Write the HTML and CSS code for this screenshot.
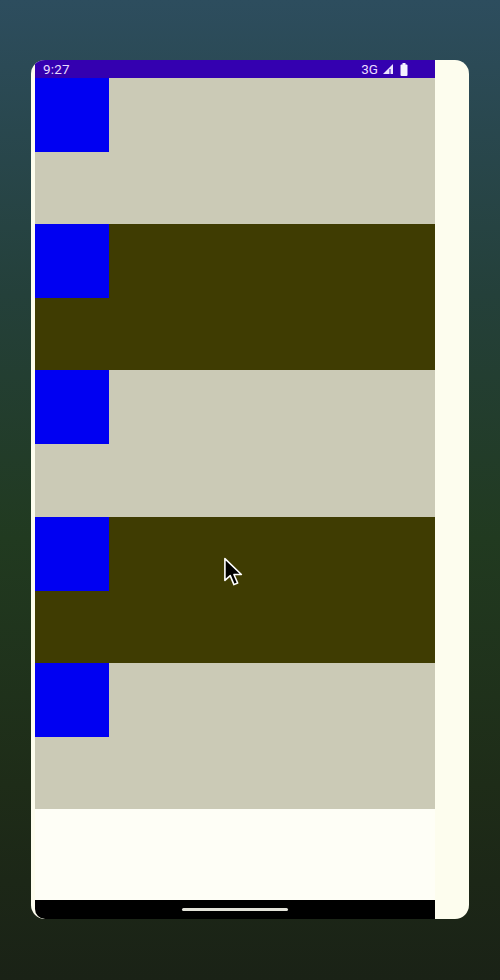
FILE: index.html
```html
<!DOCTYPE html>
<html>
<head>
<meta charset="utf-8">
<link rel="stylesheet" href="styles.css">
</head>
<body>
<div class="phone">
  <div class="screen">
    <div class="status">
      <span class="time">9:27</span>
      <div class="icons">
        <span class="net">3G</span>
        <svg class="signal" width="12" height="12" viewBox="0 0 12 12"><path d="M11 1 L11 11 L1 11 Z" fill="#ece4ff"/><path d="M8 6 L8 11" stroke="#3700b3" stroke-width="1"/></svg>
        <svg class="battery" width="8" height="13" viewBox="0 0 8 13"><rect x="2.5" y="0" width="3" height="2" fill="#f4f0ff"/><rect x="0.5" y="1.5" width="7" height="11.5" rx="1" fill="#f4f0ff"/></svg>
      </div>
    </div>
    <div class="list">
      <div class="row light"><div class="sq"></div></div>
      <div class="row dark"><div class="sq"></div></div>
      <div class="row light"><div class="sq"></div></div>
      <div class="row dark"><div class="sq"></div></div>
      <div class="row light"><div class="sq"></div></div>
    </div>
    <div class="blank"></div>
    <div class="nav"><div class="pill"></div></div>
  </div>
</div>
<svg class="cursor" width="24" height="34" viewBox="0 0 22 32"><path d="M1.5 1.5 L1.5 22 L6.5 17.5 L10 26 L13.5 24.5 L10 16.5 L17 16.5 Z" fill="#000" stroke="#fff" stroke-width="1.5" stroke-linejoin="round"/></svg>
</body>
</html>
```
FILE: styles.css
```css
html, body {
  margin: 0;
  padding: 0;
}
body {
  width: 500px;
  height: 980px;
  overflow: hidden;
  position: relative;
  background: linear-gradient(180deg, #2d4d5e 0%, #24403a 30%, #213a20 55%, #1e2c18 80%, #1a2216 100%);
  font-family: Roboto, "Noto Sans", sans-serif;
}
.phone {
  margin: 60px 0 0 31px;
  width: 438px;
  height: 859px;
  border-radius: 14px;
  background: #fdfdee;
  overflow: hidden;
  display: flex;
  padding-left: 4px;
  box-sizing: border-box;
}
.screen {
  width: 400px;
  display: flex;
  flex-direction: column;
}
.status {
  height: 18px;
  background: #3400b0;
  color: #e8dcff;
  display: flex;
  align-items: center;
  justify-content: space-between;
  padding: 0 27px 0 8px;
  font-size: 13.5px;
}
.time {
  letter-spacing: 0.2px;
}
.icons {
  display: flex;
  align-items: center;
  gap: 3px;
}
.net {
  margin-right: 1px;
}
.battery {
  margin-left: 3px;
}
.list {
  display: grid;
  grid-template-rows: 146px 146px 147px 146px 146px;
}
.row {
  display: flex;
  align-items: flex-start;
}
.light {
  background: #cbcab6;
}
.dark {
  background: #3f3c02;
}
.sq {
  width: 74px;
  height: 74px;
  background: #0000f2;
}
.blank {
  height: 91px;
  background: #fefef6;
}
.nav {
  height: 19px;
  background: #000;
  display: flex;
  align-items: center;
  justify-content: center;
  border-bottom-left-radius: 10px;
}
.pill {
  width: 106px;
  height: 3px;
  border-radius: 2px;
  background: #e4e4da;
  margin-left: 0;
}
.cursor {
  position: absolute;
  left: 223px;
  top: 557px;
}
```
